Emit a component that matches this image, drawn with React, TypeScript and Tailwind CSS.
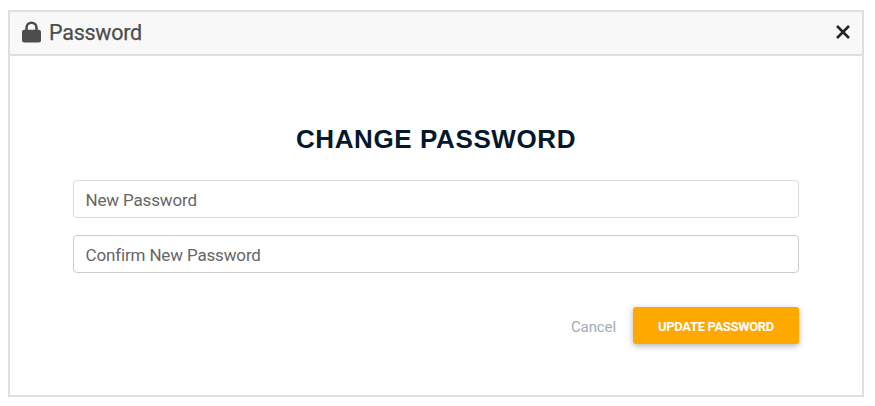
export default function App() {
  return (
    <div className="h-[406px] w-[875px] bg-white pt-[10px] pl-2 font-[Roboto,sans-serif]">
      <div className="flex h-[387px] w-[856px] flex-col border-2 border-[#dfdfdf] bg-white">
        {/* Header */}
        <div className="flex h-[44px] shrink-0 items-center justify-between border-b-2 border-[#dfdfdf] bg-[#f8f8f8] pr-[11px] pb-[2px] pl-3">
          <div className="flex items-center gap-2 text-[#4d4d4d]">
            <svg className="h-[22px] w-[19px]" viewBox="0 0 19 22" fill="none">
              <path d="M4.5 10V6.8a5 5 0 0 1 10 0V10" stroke="currentColor" strokeWidth="2.6" />
              <rect y="8.8" width="19" height="12.6" rx="2.2" fill="currentColor" />
            </svg>
            <h1 className="pt-[2px] text-[21.5px] leading-6 tracking-[-0.25px] [-webkit-text-stroke:0.25px]">Password</h1>
          </div>
          <button aria-label="Close">
            <svg className="h-4 w-4" viewBox="0 0 16 16" stroke="#222" strokeWidth="2.5">
              <path d="M2 2l12 12M14 2l-12 12" />
            </svg>
          </button>
        </div>

        {/* Form */}
        <form className="flex flex-col px-[63px] pt-[67px]">
          <h2 className="text-center font-['Liberation_Sans',sans-serif] text-[26px] leading-8 font-bold tracking-[0.6px] text-[#04192b]">
            CHANGE PASSWORD
          </h2>
          <input
            type="password"
            placeholder="New Password"
            className="mt-[25px] h-[38px] rounded border border-[#d8d8d8] px-[11.5px] pt-[2px] text-[17px] tracking-[-0.15px] placeholder:text-[#666]"
          />
          <input
            type="password"
            placeholder="Confirm New Password"
            className="mt-[17px] h-[38px] rounded border border-[#cdcdcd] px-[11.5px] pt-[2px] text-[17px] tracking-[-0.15px] placeholder:text-[#666]"
          />
          <div className="mt-[34px] flex items-center justify-end gap-[17px]">
            <button type="button" className="pt-[3px] text-[15px] tracking-[-0.1px] text-[#a3abb8]">
              Cancel
            </button>
            <button className="h-[37px] w-[166px] rounded-[3px] bg-[#ffa800] pt-[3px] text-[13px] font-bold tracking-[-0.35px] text-white shadow-[0_2px_6px_rgba(0,0,0,0.3)]">
              UPDATE PASSWORD
            </button>
          </div>
        </form>
      </div>
    </div>
  );
}
